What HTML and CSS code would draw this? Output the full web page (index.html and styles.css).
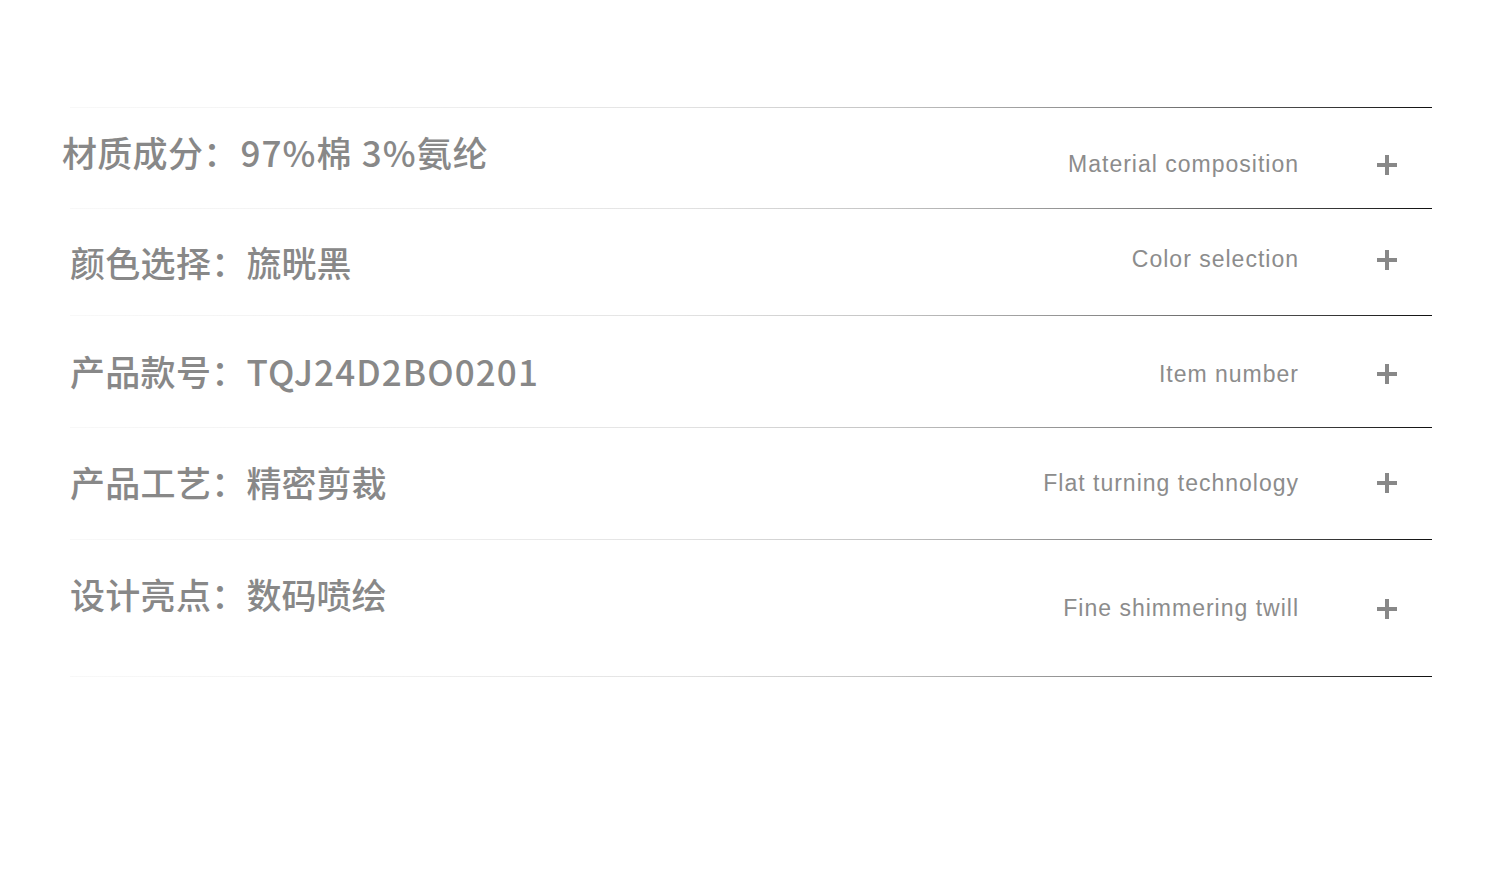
FILE: index.html
```html
<!DOCTYPE html>
<html lang="zh-CN">

<head>
    <meta charset="UTF-8">
    <meta name="viewport" content="width=device-width, initial-scale=1.0">
    <title>商品信息</title>
    <link rel="stylesheet" href="styles.css">
</head>

<body>
    <div class="spec-list">
        <div class="spec-row row-1">
            <div class="spec-cn">材质成分：<span class="spec-val latin">97%棉 3%氨纶</span></div>
            <div class="spec-meta">
                <span class="spec-en">Material composition</span>
                <span class="plus"></span>
            </div>
        </div>
        <div class="spec-row row-2">
            <div class="spec-cn">颜色选择：<span class="spec-val">旒晄黑</span></div>
            <div class="spec-meta">
                <span class="spec-en">Color selection</span>
                <span class="plus"></span>
            </div>
        </div>
        <div class="spec-row row-3">
            <div class="spec-cn">产品款号：<span class="spec-val latin">TQJ24D2BO0201</span></div>
            <div class="spec-meta">
                <span class="spec-en">Item number</span>
                <span class="plus"></span>
            </div>
        </div>
        <div class="spec-row row-4">
            <div class="spec-cn">产品工艺：<span class="spec-val">精密剪裁</span></div>
            <div class="spec-meta">
                <span class="spec-en">Flat turning technology</span>
                <span class="plus"></span>
            </div>
        </div>
        <div class="spec-row row-5">
            <div class="spec-cn">设计亮点：<span class="spec-val">数码喷绘</span></div>
            <div class="spec-meta">
                <span class="spec-en">Fine shimmering twill</span>
                <span class="plus"></span>
            </div>
        </div>
        <div class="spec-rule"></div>
    </div>
</body>

</html>
```

FILE: styles.css
```css
body {
    margin: 0;
    background-color: #fff;
    font-family: "Liberation Sans", "Noto Sans CJK SC", sans-serif;
}

.spec-list {
    width: 1362px;
    margin-left: 70px;
    padding-top: 107px;
}

.spec-row,
.spec-rule {
    background-image: linear-gradient(to right, #f8f8f8 0%, #f0f0f0 25%, #e2e2e2 45%, #c4c4c4 60%, #7a7a7a 80%, #111 100%);
    background-size: 100% 1px;
    background-repeat: no-repeat;
    background-position: left top;
}

.spec-rule {
    height: 1px;
}

.spec-row {
    display: flex;
    justify-content: space-between;
    align-items: center;
    padding-right: 35px;
}

.row-1 { height: 101px; }
.row-2 { height: 107px; }
.row-3 { height: 112px; }
.row-4 { height: 112px; }
.row-5 { height: 137px; }

.spec-cn {
    font-family: "Noto Sans CJK SC", sans-serif;
    font-size: 35px;
    font-weight: 500;
    line-height: 1.2;
    color: #888;
    letter-spacing: 0.3px;
    white-space: nowrap;
}

.spec-val {
    letter-spacing: 0;
}

.spec-val.latin {
    letter-spacing: 1.1px;
}

.row-1 .spec-cn {
    margin-left: -8px;
    margin-bottom: 12px;
}

.row-1 .spec-val {
    margin-left: 2px;
}

.row-3 .spec-cn {
    margin-bottom: 0;
}

.row-4 .spec-cn {
    margin-bottom: 2px;
}

.row-5 .spec-cn {
    margin-bottom: 28px;
}

.spec-meta {
    display: flex;
    align-items: center;
    gap: 78px;
}

.row-1 .spec-meta { margin-top: 14px; }
.row-2 .spec-meta { margin-top: -4px; }
.row-3 .spec-meta { margin-top: 6px; }
.row-4 .spec-meta { margin-top: 0; }
.row-5 .spec-meta { margin-top: 2px; }

.spec-en {
    font-size: 23px;
    color: #8c8c8c;
    letter-spacing: 1px;
}

.plus {
    position: relative;
    width: 20px;
    height: 20px;
}

.plus::before,
.plus::after {
    content: "";
    position: absolute;
    background-color: #888;
}

.plus::before {
    left: 0;
    top: 8px;
    width: 20px;
    height: 4px;
}

.plus::after {
    left: 8px;
    top: 0;
    width: 4px;
    height: 20px;
}
```
